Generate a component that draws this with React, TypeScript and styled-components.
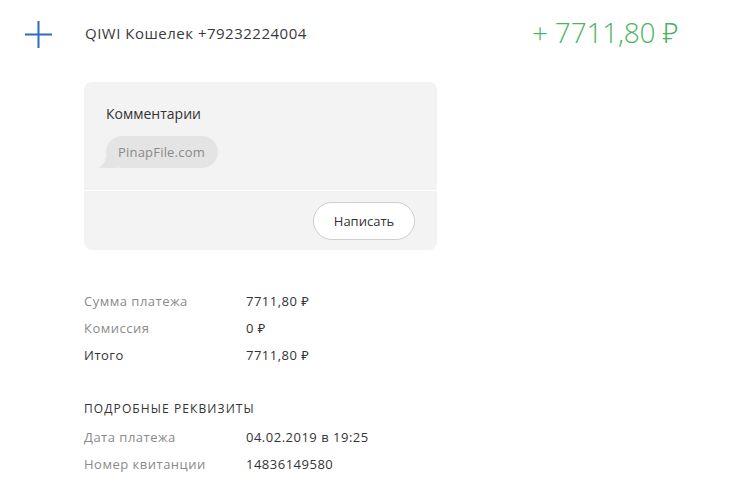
import React from "react";
import styled, { createGlobalStyle } from "styled-components";

const Global = createGlobalStyle`
  html, body { margin: 0; padding: 0; background: #fff; }
  body { font-family: "Open Sans", "Noto Sans", sans-serif; color: #333; }
`;

const Page = styled.div`
  width: 746px;
  height: 477px;
  overflow: hidden;
  display: flex;
  flex-direction: column;
  padding: 0 0 0 24px;
  box-sizing: border-box;
`;

const Header = styled.div`
  display: flex;
  align-items: center;
  height: 70px;
`;

const PlusIcon = styled.svg`
  width: 29px;
  height: 29px;
  flex: none;
`;

const Title = styled.div`
  margin-left: 32px;
  font-size: 15px;
  letter-spacing: 0.5px;
  color: #3a3a3a;
  width: 443px;
  margin-top: -2px;
`;

const Amount = styled.div`
  font-size: 28px;
  font-weight: 300;
  letter-spacing: -0.2px;
  color: #4bb45f;
  margin-left: 4px;
  margin-top: -4px;
`;

const Body = styled.div`
  margin-left: 60px;
  display: flex;
  flex-direction: column;
`;

const Card = styled.div`
  margin-top: 14px;
  width: 353px;
  background: #f3f3f3;
  border-radius: 8px;
  display: flex;
  flex-direction: column;
`;

const CardTop = styled.div`
  padding: 22px 22px 22px 22px;
  border-bottom: 1px solid #fff;
`;

const CardTitle = styled.div`
  font-size: 14px;
  color: #333;
  line-height: 20px;
`;

const Bubble = styled.div`
  position: relative;
  margin-top: 12px;
  display: inline-flex;
  align-items: center;
  height: 32px;
  padding: 0 13px 0 12px;
  border-radius: 16px;
  background: #e4e4e4;
  font-size: 13px;
  letter-spacing: 0.2px;
  color: #8a8a8a;
  &::before {
    content: "";
    position: absolute;
    left: -7px;
    bottom: 0;
    width: 18px;
    height: 14px;
    background: #e4e4e4;
    clip-path: polygon(100% 0, 100% 100%, 0 100%, 30% 60%, 45% 0);
  }
`;

const CardBottom = styled.div`
  display: flex;
  justify-content: flex-end;
  padding: 11px 22px 10px 22px;
`;

const WriteButton = styled.button`
  height: 38px;
  width: 102px;
  border-radius: 19px;
  border: 1px solid #cfcfcf;
  background: #fff;
  font-family: inherit;
  font-size: 13px;
  color: #333;
  cursor: pointer;
`;

const Rows = styled.div`
  margin-top: 37px;
  display: flex;
  flex-direction: column;
`;

const Row = styled.div`
  display: flex;
  height: 27px;
  align-items: center;
  font-size: 13px;
  letter-spacing: 0.5px;
`;

const Label = styled.div<{ $strong?: boolean }>`
  width: 162px;
  color: ${(p) => (p.$strong ? "#333" : "#8a8a8a")};
`;

const Value = styled.div`
  color: #333;
`;

const SectionTitle = styled.div`
  margin-top: 29px;
  margin-bottom: 4px;
  font-size: 12px;
  letter-spacing: 1.1px;
  text-transform: uppercase;
  color: #333;
  height: 22px;
  display: flex;
  align-items: center;
`;

export default function App() {
  return (
    <>
      <Global />
      <Page>
        <Header>
          <PlusIcon viewBox="0 0 29 29">
            <path d="M14.5 1 V28 M1 14.5 H28" stroke="#2d6cc0" strokeWidth="2" fill="none" />
          </PlusIcon>
          <Title>QIWI Кошелек +79232224004</Title>
          <Amount>+ 7711,80 ₽</Amount>
        </Header>
        <Body>
          <Card>
            <CardTop>
              <CardTitle>Комментарии</CardTitle>
              <Bubble>PinapFile.com</Bubble>
            </CardTop>
            <CardBottom>
              <WriteButton>Написать</WriteButton>
            </CardBottom>
          </Card>
          <Rows>
            <Row><Label>Сумма платежа</Label><Value>7711,80 ₽</Value></Row>
            <Row><Label>Комиссия</Label><Value>0 ₽</Value></Row>
            <Row><Label $strong>Итого</Label><Value>7711,80 ₽</Value></Row>
          </Rows>
          <SectionTitle>Подробные реквизиты</SectionTitle>
          <Row><Label>Дата платежа</Label><Value>04.02.2019 в 19:25</Value></Row>
          <Row><Label>Номер квитанции</Label><Value>14836149580</Value></Row>
        </Body>
      </Page>
    </>
  );
}
